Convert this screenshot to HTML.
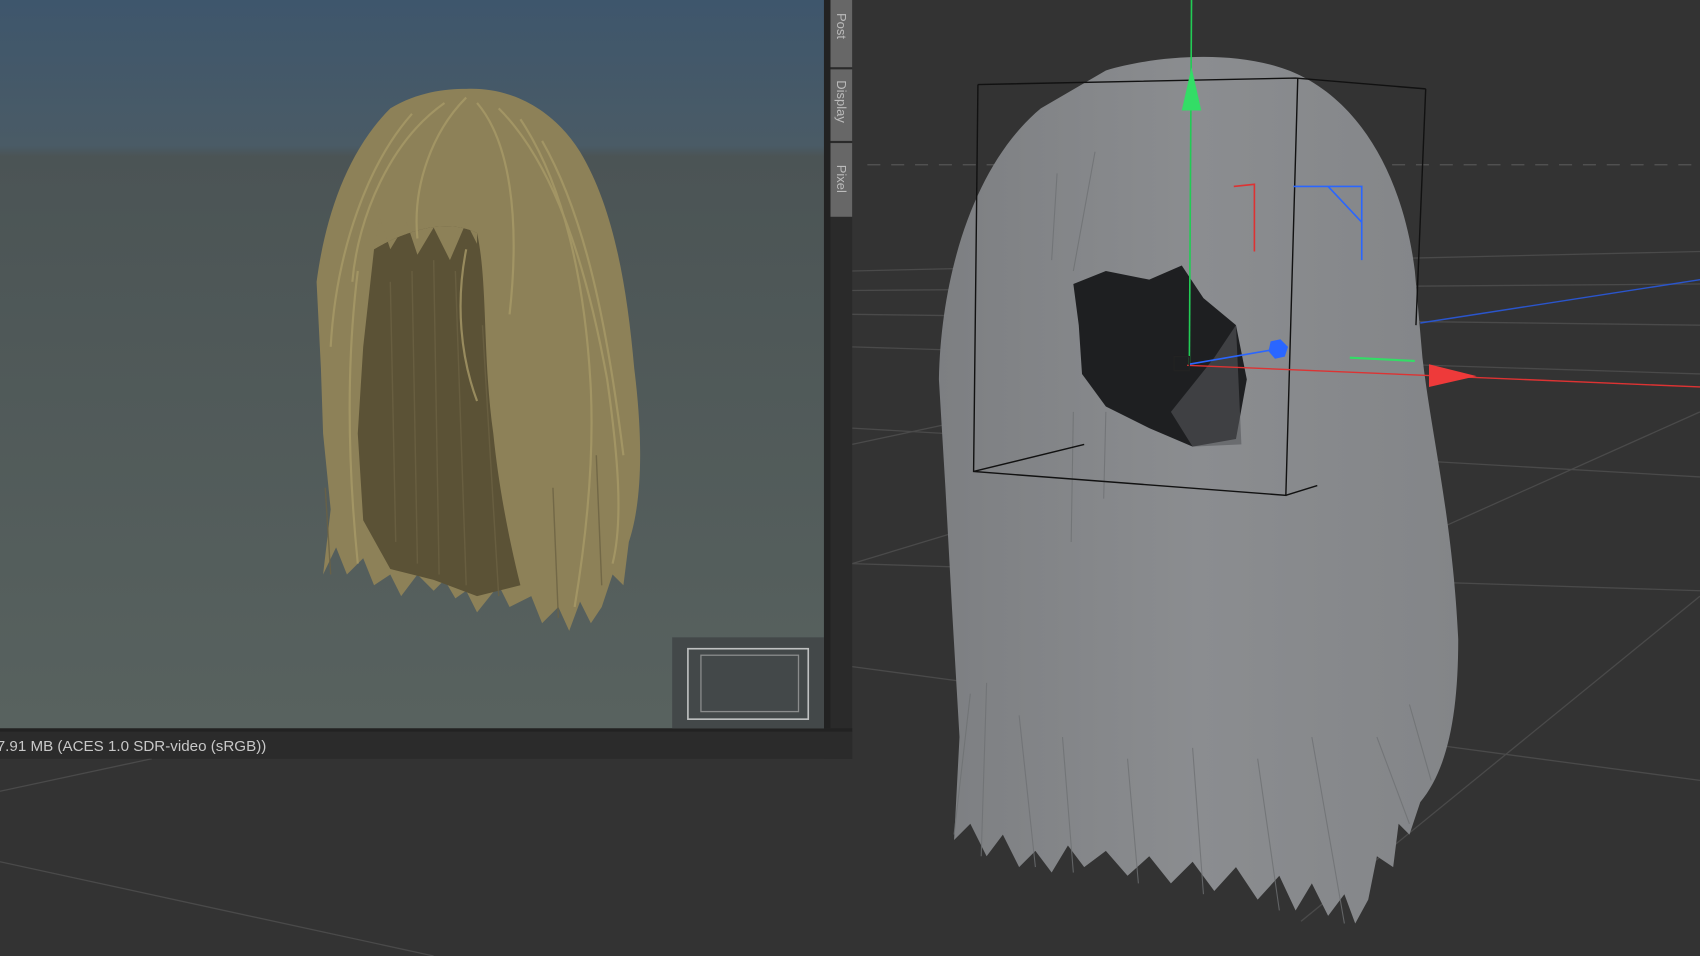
<!DOCTYPE html>
<html><head><meta charset="utf-8"><style>
html,body{margin:0;padding:0;background:#333;overflow:hidden}
svg{display:block}
</style></head><body>
<svg width="1700" height="956" viewBox="0 0 1568 882" preserveAspectRatio="none" xmlns="http://www.w3.org/2000/svg">
<defs>
<linearGradient id="sky" x1="0" y1="0" x2="0" y2="1">
<stop offset="0" stop-color="#3e566c"/><stop offset="0.2" stop-color="#4a5b66"/><stop offset="0.215" stop-color="#4b5455"/><stop offset="1" stop-color="#58625f"/>
</linearGradient>
<linearGradient id="gh" x1="0" y1="0" x2="1" y2="0">
<stop offset="0" stop-color="#7d7f82"/><stop offset="0.5" stop-color="#8b8d90"/><stop offset="1" stop-color="#838588"/>
</linearGradient>
</defs>
<rect width="1568" height="882" fill="#333"/>
<g stroke="#4a4a4a" stroke-width="1.2" fill="none">
<line x1="786" y1="250" x2="1568" y2="232"/>
<line x1="786" y1="268" x2="1568" y2="262"/>
<line x1="786" y1="290" x2="1568" y2="300"/>
<line x1="786" y1="320" x2="1568" y2="345"/>
<line x1="786" y1="395" x2="1568" y2="440"/>
<line x1="786" y1="520" x2="1568" y2="545"/>
<line x1="786" y1="615" x2="1568" y2="720"/>
<line x1="786" y1="520" x2="1050" y2="440"/>
<line x1="786" y1="410" x2="880" y2="390"/>
<line x1="1568" y1="380" x2="1300" y2="500"/>
<line x1="1568" y1="550" x2="1200" y2="850"/>
<line x1="0" y1="795" x2="400" y2="882"/>
<line x1="0" y1="730" x2="140" y2="700"/>
</g>
<line x1="800" y1="152" x2="1568" y2="152" stroke="#555" stroke-dasharray="12 10" stroke-width="1.2"/>
<!-- gray hair -->
<path d="M1020 65 C1070 50 1150 45 1200 70 C1260 100 1295 170 1305 250 L1312 330 C1320 400 1340 480 1345 590 C1345 660 1335 710 1310 740 L1300 770 L1290 760 L1285 800 L1270 790 L1262 830 L1250 852 L1240 825 L1225 845 L1210 815 L1195 840 L1180 808 L1160 830 L1140 800 L1120 822 L1100 795 L1080 815 L1060 790 L1040 808 L1020 785 L1000 800 L985 780 L970 805 L955 785 L940 800 L925 770 L910 790 L895 760 L880 775 L885 680 L878 560 L872 450 L866 350 C868 250 900 150 960 100 Z" fill="url(#gh)"/>
<g stroke="#6e7073" stroke-width="1" opacity="0.8" fill="none">
<path d="M895 640 L880 770 M910 630 L905 790 M940 660 L955 800 M980 680 L990 805 M1040 700 L1050 815 M1100 690 L1110 825 M1160 700 L1180 840 M1210 680 L1240 852 M1270 680 L1300 760 M1300 650 L1320 720"/>
<path d="M975 160 L970 240 M1010 140 L990 250 M990 380 L988 500 M1020 380 L1018 460"/>
</g>
<path d="M990 262 L1020 250 L1060 258 L1090 245 L1110 275 L1140 300 L1150 350 L1140 405 L1100 412 L1060 395 L1020 375 L998 345 L995 300 Z" fill="#1e1f21"/>
<path d="M1080 380 L1120 330 L1140 300 L1145 410 L1100 412 Z" fill="#55575a" opacity="0.6"/>
<g stroke="#111" stroke-width="1.3" fill="none">
<path d="M902 78 L1195 72 L1315 82 M902 78 L898 435 L1186 457 L1197 72 M1315 82 L1306 300 M898 435 L1000 410 M1186 457 L1215 448"/>
</g>
<line x1="1099" y1="0" x2="1097" y2="336" stroke="#22cc55" stroke-width="1.5"/>
<path d="M1090 102 L1099 62 L1108 102 Z" fill="#33dd66"/>
<line x1="1095" y1="337" x2="1568" y2="357" stroke="#dd3333" stroke-width="1.3"/>
<path d="M1318 336 L1362 347 L1318 357 Z" fill="#ee3a3a"/>
<line x1="1097" y1="336" x2="1178" y2="322" stroke="#2a66ff" stroke-width="1.5"/>
<path d="M1172 315 L1181 313 L1188 320 L1185 329 L1176 331 L1170 324 Z" fill="#2a66ff"/>
<line x1="1310" y1="298" x2="1568" y2="258" stroke="#2a55cc" stroke-width="1.3"/>
<line x1="1245" y1="330" x2="1305" y2="333" stroke="#33dd66" stroke-width="2"/>
<rect x="1083" y="329" width="14" height="13" fill="none" stroke="#222" stroke-width="1.2"/>
<path d="M1138 172 L1157 170 L1157 232" stroke="#dd3333" stroke-width="1.5" fill="none"/>
<path d="M1193 172 L1256 172 L1256 240 M1225 172 L1256 205" stroke="#2a66ff" stroke-width="1.5" fill="none"/>
<!-- left viewport -->
<rect x="0" y="0" width="760" height="672" fill="url(#sky)"/>
<rect x="760" y="0" width="26" height="700" fill="#2a2a2a"/>
<rect x="760" y="0" width="6" height="672" fill="#222"/>
<rect x="0" y="672" width="786" height="28" fill="#2b2b2b"/>
<rect x="0" y="672" width="786" height="3" fill="#222"/>
<text x="-3" y="693" font-family="Liberation Sans, sans-serif" font-size="14" fill="#c8c8c8">7.91 MB  (ACES 1.0 SDR-video (sRGB))</text>
<g font-family="Liberation Sans, sans-serif" font-size="12" fill="#bbb">
<rect x="766" y="0" width="20" height="62" fill="#676767"/>
<rect x="766" y="64" width="20" height="66" fill="#676767"/>
<rect x="766" y="132" width="20" height="68" fill="#676767"/>
<text transform="translate(772,12) rotate(90)">Post</text>
<text transform="translate(772,74) rotate(90)">Display</text>
<text transform="translate(772,152) rotate(90)">Pixel</text>
</g>
<rect x="620" y="588" width="140" height="84" fill="#434849"/>
<rect x="634.5" y="598.5" width="111" height="65" fill="none" stroke="#bfc1c1" stroke-width="1.5"/>
<rect x="646.5" y="604.5" width="90" height="52" fill="none" stroke="#8a8c8c" stroke-width="1.2"/>
<!-- blonde hair -->
<path d="M430 82 C470 80 510 100 535 140 C565 190 578 260 585 340 C595 420 590 470 580 500 L575 540 L565 530 L555 560 L545 575 L535 555 L525 582 L515 560 L500 575 L490 550 L470 560 L460 540 L440 565 L430 545 L420 552 L410 535 L400 545 L385 530 L370 550 L360 530 L345 540 L335 515 L320 530 L310 505 L298 530 L305 470 L298 400 L296 340 L292 260 C300 200 320 140 360 100 C385 85 410 82 430 82 Z" fill="#8d8158"/>
<path d="M345 230 C370 215 410 200 440 215 C450 260 445 330 455 400 C460 450 470 500 480 540 L440 550 L400 535 L360 525 L335 480 L330 400 L335 320 Z" fill="#5b5236"/>
<path d="M350 200 L360 230 L375 205 L385 235 L400 210 L415 240 L430 205 L440 225 L440 215 C410 200 370 215 345 230 Z" fill="#8d8158"/>
<g stroke="#a89a68" stroke-width="2" fill="none" opacity="0.8">
<path d="M430 90 C400 120 380 170 385 220"/>
<path d="M440 95 C470 130 480 200 470 290"/>
<path d="M460 100 C510 150 540 240 560 350 C570 420 575 480 565 520"/>
<path d="M410 95 C360 130 330 200 325 260"/>
<path d="M380 105 C340 150 310 230 305 320"/>
<path d="M480 110 C520 170 540 260 545 360 C548 430 540 500 530 560"/>
<path d="M500 130 C540 200 560 300 575 420"/>
<path d="M330 250 C320 330 320 420 330 520"/>
<path d="M430 230 C420 280 425 330 440 370"/>
</g>
<g stroke="#6c6243" stroke-width="1.3" fill="none" opacity="0.8">
<path d="M360 260 L365 500 M380 250 L385 520 M400 240 L405 530 M420 250 L430 540 M445 300 L460 550"/>
<path d="M300 450 L305 530 M510 450 L515 570 M550 420 L555 540"/>
</g>
</svg>
</body></html>
